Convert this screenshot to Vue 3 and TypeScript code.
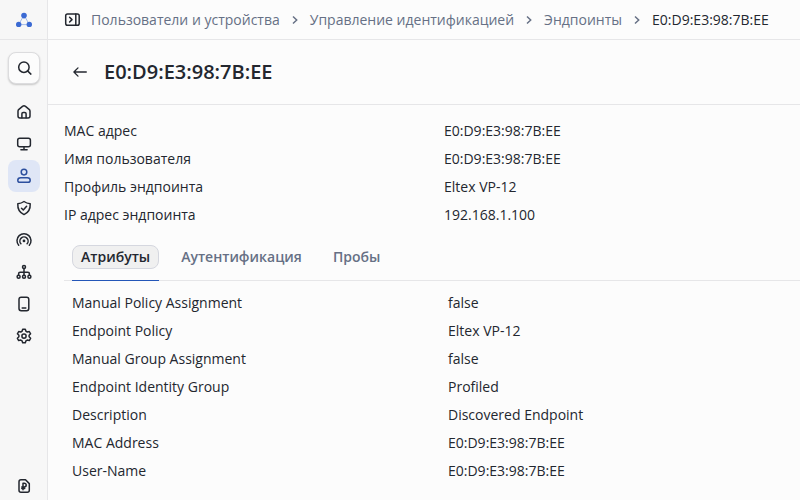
<script setup lang="ts">
import { ref } from 'vue'

interface Field {
  label: string
  value: string
}

interface NavItem {
  id: string
  title: string
}

const mac = 'E0:D9:E3:98:7B:EE'

const crumbs: string[] = ['Пользователи и устройства', 'Управление идентификацией', 'Эндпоинты']

const navItems: NavItem[] = [
  { id: 'home', title: 'Главная' },
  { id: 'monitor', title: 'Мониторинг' },
  { id: 'users', title: 'Пользователи и устройства' },
  { id: 'policy', title: 'Политики' },
  { id: 'guest', title: 'Гостевой доступ' },
  { id: 'network', title: 'Сеть' },
  { id: 'device', title: 'Устройства' },
  { id: 'settings', title: 'Настройки' },
]
const activeNav = ref('users')

const summary: Field[] = [
  { label: 'MAC адрес', value: mac },
  { label: 'Имя пользователя', value: mac },
  { label: 'Профиль эндпоинта', value: 'Eltex VP-12' },
  { label: 'IP адрес эндпоинта', value: '192.168.1.100' },
]

const tabs: string[] = ['Атрибуты', 'Аутентификация', 'Пробы']
const activeTab = ref('Атрибуты')

const attributes: Field[] = [
  { label: 'Manual Policy Assignment', value: 'false' },
  { label: 'Endpoint Policy', value: 'Eltex VP-12' },
  { label: 'Manual Group Assignment', value: 'false' },
  { label: 'Endpoint Identity Group', value: 'Profiled' },
  { label: 'Description', value: 'Discovered Endpoint' },
  { label: 'MAC Address', value: mac },
  { label: 'User-Name', value: mac },
]
</script>

<template>
  <div class="app">
    <aside class="sidebar">
      <a class="logo" href="#" aria-label="На главную">
        <svg width="16" height="16" viewBox="0 0 16 16">
          <path d="M8 3 2.7 12.6H13.3Z" fill="none" stroke="#a3baea" stroke-width="1" />
          <g fill="#3b6ad3">
            <circle cx="8" cy="3.6" r="2.8" />
            <circle cx="2.7" cy="12.4" r="2.7" />
            <circle cx="13.3" cy="12.4" r="2.7" />
          </g>
        </svg>
      </a>
      <button class="search" type="button" aria-label="Поиск">
        <svg class="icon" viewBox="0 0 16 16">
          <circle cx="7.9" cy="7.2" r="5.2" />
          <path d="m11.8 11.1 3.1 3" />
        </svg>
      </button>
      <nav class="nav">
        <button
          v-for="item in navItems"
          :key="item.id"
          type="button"
          class="nav-item"
          :class="{ active: item.id === activeNav }"
          :aria-label="item.title"
          @click="activeNav = item.id"
        >
          <svg class="icon" viewBox="0 0 16 16">
            <template v-if="item.id === 'home'">
              <path d="M2 7.2c0-.8.3-1.4.9-1.9l3.6-3c.9-.7 2.1-.7 3 0l3.6 3c.6.5.9 1.1.9 1.9V12c0 1.2-.8 2-2 2H4c-1.2 0-2-.8-2-2Z" />
              <path d="M5.9 13.8V9.8c0-.8.5-1.3 1.3-1.3h1.6c.8 0 1.3.5 1.3 1.3v4" />
            </template>
            <template v-else-if="item.id === 'monitor'">
              <rect x="1.7" y="2.3" width="12.7" height="8.4" rx="2" />
              <path d="M8 10.7v2.9M4.9 13.7h6.2" />
            </template>
            <template v-else-if="item.id === 'users'">
              <circle cx="8" cy="4.1" r="2.8" />
              <path d="M4.7 9.8h6.6c1.7 0 2.9.9 2.9 2.4 0 1.4-.8 2.1-2.2 2.1H4c-1.4 0-2.2-.7-2.2-2.1 0-1.5 1.2-2.4 2.9-2.4Z" />
            </template>
            <template v-else-if="item.id === 'policy'">
              <path d="M8 1.5c1.9 1.4 4 2 6.2 2.2.3 4.8-1.5 8.7-6.2 10.9C3.3 12.4 1.5 8.5 1.8 3.7 4 3.5 6.1 2.9 8 1.5Z" />
              <path d="m5.5 8.2 1.8 1.8 3.3-3.8" />
            </template>
            <template v-else-if="item.id === 'guest'">
              <path d="M2.7 13.3A7 7 0 1 1 13.3 13.3" />
              <path d="M4.9 11.8a4.1 4.1 0 1 1 6.2 0" />
              <circle class="dot" cx="8" cy="8.9" r="1.4" />
            </template>
            <template v-else-if="item.id === 'network'">
              <circle cx="8" cy="2.9" r="1.5" />
              <path d="M8 4.5v6.6M2.6 11V9.7c0-.9.6-1.5 1.5-1.5h7.8c.9 0 1.5.6 1.5 1.5V11" />
              <circle cx="2.6" cy="12.7" r="1.5" />
              <circle cx="8" cy="12.7" r="1.5" />
              <circle cx="13.4" cy="12.7" r="1.5" />
            </template>
            <template v-else-if="item.id === 'device'">
              <rect x="3" y="1.2" width="9.8" height="13.6" rx="2.2" />
              <path d="M6.2 12h3.6" />
            </template>
            <template v-else>
              <path d="M6.7 1.2h2.6l.6 2 1.3.8 2.1-.5 1.3 2.3-1.5 1.5v1.5l1.5 1.5-1.3 2.3-2.1-.5-1.3.8-.6 1.9H6.7l-.6-1.9-1.3-.8-2.1.5-1.3-2.3 1.5-1.5V7.3L1.4 5.8l1.3-2.3 2.1.5 1.3-.8Z" />
              <circle cx="8" cy="8.1" r="2.1" />
            </template>
          </svg>
        </button>
      </nav>
      <button class="license" type="button" aria-label="Лицензия">
        <svg class="icon" viewBox="0 0 16 16">
          <path d="M5 1.8h4.5l3.8 3.8v6.7c0 1.2-.8 2-2 2H5c-1.2 0-2-.8-2-2V3.800c0-1.200.8-2 2-2Z" />
          <path d="M7 11.7V5.2h1.3a1.9 1.9 0 0 1 0 3.8H5.8M5.8 10.6h2.9" />
        </svg>
      </button>
    </aside>

    <div class="page">
      <header class="topbar">
        <button class="toggle" type="button" aria-label="Развернуть меню">
          <svg class="icon" viewBox="0 0 16 16">
            <rect x="1.7" y="1.9" width="13.5" height="11.4" rx="1.8" />
            <path d="M11.8 1.9v11.4M5.6 5.2 8 7.6 5.6 10" />
          </svg>
        </button>
        <nav class="crumbs" aria-label="Навигация">
          <template v-for="crumb in crumbs" :key="crumb">
            <a href="#">{{ crumb }}</a>
            <svg class="chevron" viewBox="0 0 12 12"><path d="m4 2.5 3.7 3.5L4 9.5" /></svg>
          </template>
          <span class="current">{{ mac }}</span>
        </nav>
      </header>

      <div class="title-bar">
        <button class="back" type="button" aria-label="Назад">
          <svg class="icon thin" viewBox="0 0 16 16">
            <path d="M14.3 8H2M6 3.9 1.9 8 6 12.1" />
          </svg>
        </button>
        <h1>{{ mac }}</h1>
      </div>

      <main class="content">
        <dl class="fields">
          <div v-for="field in summary" :key="field.label" class="row">
            <dt>{{ field.label }}</dt>
            <dd>{{ field.value }}</dd>
          </div>
        </dl>
        <div class="tabs" role="tablist">
          <div v-for="tab in tabs" :key="tab" class="tab" :class="{ active: tab === activeTab }">
            <button type="button" role="tab" :aria-selected="tab === activeTab" @click="activeTab = tab">
              {{ tab }}
            </button>
          </div>
        </div>
        <dl v-if="activeTab === 'Атрибуты'" class="fields attributes">
          <div v-for="field in attributes" :key="field.label" class="row">
            <dt>{{ field.label }}</dt>
            <dd>{{ field.value }}</dd>
          </div>
        </dl>
      </main>
    </div>
  </div>
</template>

<style>
body {
  margin: 0;
  background: #fcfcfc;
}
</style>

<style scoped>
.app {
  display: flex;
  min-height: 100vh;
  color: #23272f;
  font-family: 'Open Sans', 'Noto Sans', sans-serif;
  font-size: 14px;
  line-height: 20px;
}

button {
  box-sizing: border-box;
  margin: 0;
  padding: 0;
  border: 0;
  background: none;
  color: inherit;
  font: inherit;
  cursor: pointer;
}

.icon {
  display: block;
  width: 16px;
  height: 16px;
  fill: none;
  stroke: currentColor;
  stroke-width: 1.5;
  stroke-linecap: round;
  stroke-linejoin: round;
}

.icon.thin {
  stroke-width: 1.3;
}

.icon .dot {
  fill: currentColor;
  stroke: none;
}

.sidebar {
  box-sizing: border-box;
  display: flex;
  flex: 0 0 48px;
  flex-direction: column;
  align-items: center;
  border-right: 1px solid #e6e6e8;
  background: #f7f7f7;
}

.logo {
  box-sizing: border-box;
  display: grid;
  place-items: center;
  align-self: stretch;
  height: 40px;
  border-bottom: 1px solid #e6e6e8;
}

.search,
.nav-item,
.license {
  display: grid;
  place-items: center;
  width: 32px;
  height: 32px;
  border-radius: 8px;
}

.search {
  margin: 12px 0;
  border: 1px solid #dcdcde;
  background: #fcfcfc;
  box-shadow: 0 1px 2px #00000033;
}

.nav {
  display: flex;
  flex-direction: column;
}

.nav-item.active {
  background: #dfe6f6;
  color: #2c4f9e;
}

.license {
  height: 28px;
  margin-top: auto;
}

.page {
  flex: 1;
  min-width: 0;
}

.topbar {
  box-sizing: border-box;
  display: flex;
  align-items: center;
  gap: 11px;
  height: 40px;
  padding: 0 16px;
  border-bottom: 1px solid #e6e6e8;
}

.crumbs {
  display: flex;
  align-items: center;
  gap: 9px;
  color: #667085;
  white-space: nowrap;
}

.crumbs a {
  color: inherit;
  text-decoration: none;
}

.chevron {
  width: 12px;
  height: 12px;
  fill: none;
  stroke: currentColor;
  stroke-width: 1.5;
}

.current {
  color: #23272f;
}

.title-bar {
  display: flex;
  align-items: center;
  gap: 16px;
  padding: 16px 24px;
  border-bottom: 1px solid #e6e6e8;
}

h1 {
  margin: 0;
  font-size: 20px;
  font-weight: 600;
  line-height: 32px;
}

.content {
  padding: 12px 0 0 16px;
}

.fields {
  margin: 0;
}

.row {
  display: grid;
  grid-template-columns: minmax(0, 380px) 1fr;
  line-height: 28px;
}

dd {
  margin: 0;
}

.tabs {
  display: flex;
  gap: 13px;
  padding: 16px 8px 0;
  border-bottom: 1px solid #e6e6e8;
  color: #667085;
  font-weight: 600;
}

.tab {
  margin-bottom: -1px;
  padding-bottom: 11px;
  border-bottom: 1px solid transparent;
}

.tab button {
  height: 24px;
  padding: 0 8px;
  border: 1px solid transparent;
  border-radius: 8px;
}

.tab.active {
  border-color: #2456b8;
  color: #23272f;
}

.tab.active button {
  border-color: #d5d7df;
  background: #f0f0f0;
}

.attributes {
  padding: 8px;
}

.attributes .row {
  grid-template-columns: minmax(0, 376px) 1fr;
}
</style>
